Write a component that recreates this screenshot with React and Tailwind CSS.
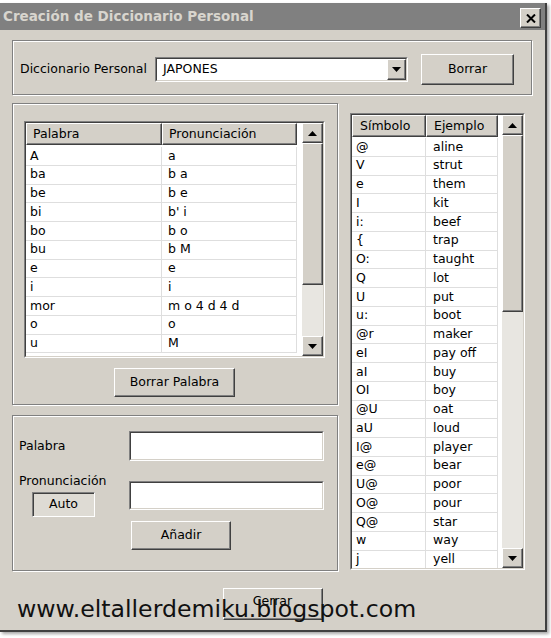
import React from 'react';

const raised =
  "border border-t-white border-l-white border-r-[#404040] border-b-[#404040] shadow-[inset_-1px_-1px_0_#808080]";
const sunkenOuter = "border border-t-[#808080] border-l-[#808080] border-b-white border-r-white";
const sunkenInner = "border border-t-[#404040] border-l-[#404040] border-b-[#d4d0c8] border-r-[#d4d0c8]";
const group = "border border-[#808080] shadow-[inset_1px_1px_0_#fff,1px_1px_0_#fff]";

const Tri = ({ up }) => (
  <svg width="9" height="5" viewBox="0 0 9 5">
    <path d={up ? 'M0 5L4.5 0L9 5Z' : 'M0 0L4.5 5L9 0Z'} fill="#000" />
  </svg>
);

const ArrowBtn = ({ up, className }) => (
  <div className={`${raised} bg-[#d4d0c8] flex items-center justify-center shrink-0 ${className}`}>
    <Tri up={up} />
  </div>
);

const Scrollbar = ({ thumb }) => (
  <div className="w-[21px] h-full flex flex-col bg-[#e8e6e1] shrink-0">
    <ArrowBtn up className="h-[20px]" />
    <div className={`${raised} bg-[#d4d0c8] shrink-0 ${thumb}`} />
    <div className="flex-1" />
    <ArrowBtn className="h-[20px]" />
  </div>
);

const ListView = ({ box, cols, rows, thumb, rowsPt }) => (
  <div className={`${sunkenOuter} shrink-0 ${box}`}>
    <div className={`${sunkenInner} bg-white h-full flex overflow-hidden`}>
      <div className="flex flex-col">
        <div className="flex h-[22px] shrink-0">
          {cols.map((c) => (
            <div key={c.label} className={`${raised} bg-[#d4d0c8] ${c.w} ${c.hp} flex items-center`}>
              {c.label}
            </div>
          ))}
        </div>
        <div className={rowsPt}>
          {rows.map((r, i) => (
            <div key={i} className="flex h-[18.75px]">
              {r.map((t, j) => (
                <div
                  key={j}
                  className={`${cols[j].w} ${cols[j].rp} border-r border-b border-[#dedede] flex items-center whitespace-pre`}
                >
                  {t}
                </div>
              ))}
            </div>
          ))}
        </div>
      </div>
      <div className="flex-1" />
      <Scrollbar thumb={thumb} />
    </div>
  </div>
);

const palabras = [
  ['A', 'a'],
  ['ba', 'b a'],
  ['be', 'b e'],
  ['bi', "b' i"],
  ['bo', 'b o'],
  ['bu', 'b M'],
  ['e', 'e'],
  ['i', 'i'],
  ['mor', 'm o 4 d 4 d'],
  ['o', 'o'],
  ['u', 'M'],
];

const simbolos = [
  ['@', 'aline'],
  ['V', 'strut'],
  ['e', 'them'],
  ['I', 'kit'],
  ['i:', 'beef'],
  ['{', 'trap'],
  ['O:', 'taught'],
  ['Q', 'lot'],
  ['U', 'put'],
  ['u:', 'boot'],
  ['@r', 'maker'],
  ['eI', 'pay off'],
  ['aI', 'buy'],
  ['OI', 'boy'],
  ['@U', 'oat'],
  ['aU', 'loud'],
  ['I@', 'player'],
  ['e@', 'bear'],
  ['U@', 'poor'],
  ['O@', 'pour'],
  ['Q@', 'star'],
  ['w', 'way'],
  ['j', 'yell'],
];

const Field = ({ className, children }) => (
  <div className={`${sunkenOuter} ${className}`}>
    <div className={`${sunkenInner} bg-white h-full flex items-center`}>{children}</div>
  </div>
);

export default function App() {
  return (
    <div className="w-[551px] h-[638px] bg-white relative overflow-hidden font-['DejaVu_Sans',sans-serif] text-[12.5px] leading-none text-black">
      <div className="mt-[3px] w-[547px] h-[629px] bg-[#d4d0c8] border-r-2 border-b-2 border-r-[#404040] border-b-[#404040] shadow-[2px_2px_3px_rgba(0,0,0,0.35)] flex flex-col">
        {/* title bar */}
        <div className="h-[27px] bg-[#808080] flex items-center justify-between pl-[3px] pr-[4px] shrink-0">
          <span className="font-bold text-[13.5px] text-[#d8d5ce]">Creación de Diccionario Personal</span>
          <div className={`${raised} bg-[#d4d0c8] w-[21px] h-[20px] mt-[3px] flex items-center justify-center`}>
            <svg width="10" height="9" viewBox="0 0 10 9">
              <path d="M1 0.5L9 8.5M9 0.5L1 8.5" stroke="#000" strokeWidth="2" />
            </svg>
          </div>
        </div>

        <div className="flex-1 flex flex-col px-[12px] pt-[10px]">
          {/* diccionario */}
          <div className={`${group} w-[520px] h-[55px] flex items-center pl-[7px] pt-[3px] shrink-0`}>
            <span className="w-[135px]">Diccionario Personal</span>
            <Field className="w-[253px] h-[25px]">
              <span className="flex-1 pl-[6px]">JAPONES</span>
              <ArrowBtn className="w-[19px] h-full" />
            </Field>
            <button className={`${raised} bg-[#d4d0c8] ml-[13px] w-[93px] h-[31px]`}>Borrar</button>
          </div>

          <div className="mt-[8px] flex gap-[12px]">
            <div className="w-[326px] flex flex-col">
              <div className={`${group} h-[302px] flex flex-col pt-[17px] pl-[11px]`}>
                <ListView
                  box="w-[301px] h-[237px]"
                  rowsPt="pt-[2px]"
                  thumb="h-[142px]"
                  cols={[
                    { label: 'Palabra', w: 'w-[136px]', hp: 'pl-[6px]', rp: 'pl-[4px]' },
                    { label: 'Pronunciación', w: 'w-[135px]', hp: 'pl-[6px]', rp: 'pl-[6px]' },
                  ]}
                  rows={palabras}
                />
                <button className={`${raised} bg-[#d4d0c8] mt-[10px] ml-[90px] w-[121px] h-[29px] shrink-0`}>
                  Borrar Palabra
                </button>
              </div>

              <div className={`${group} mt-[10px] h-[156px] flex flex-col pt-[15px]`}>
                <div className="flex items-center">
                  <span className="w-[116px] pl-[6px]">Palabra</span>
                  <Field className="w-[195px] h-[30px]" />
                </div>
                <div className="flex mt-[12px]">
                  <div className="w-[116px] pl-[6px] flex flex-col">
                    <span className="h-[16px] flex items-center">Pronunciación</span>
                    <div
                      className={`${sunkenOuter} mt-[3px] ml-[13px] w-[63px] h-[25px] bg-[#dedbd4] shadow-[inset_1px_1px_0_#404040] flex items-center justify-center`}
                    >
                      Auto
                    </div>
                  </div>
                  <Field className="mt-[8px] w-[195px] h-[29px]" />
                </div>
                <button className={`${raised} bg-[#d4d0c8] mt-[4px] ml-[118px] w-[100px] h-[29px]`}>Añadir</button>
              </div>
            </div>

            <ListView
              box="mt-[10px] w-[175px] h-[457px]"
              rowsPt="pt-[1px]"
              thumb="h-[177px]"
              cols={[
                { label: 'Símbolo', w: 'w-[74px]', hp: 'pl-[7px]', rp: 'pl-[4px]' },
                { label: 'Ejemplo', w: 'w-[72px]', hp: 'pl-[7px]', rp: 'pl-[7px]' },
              ]}
              rows={simbolos}
            />
          </div>

          <button className={`${raised} bg-[#d4d0c8] mt-[17px] self-center w-[100px] h-[32px] pb-[6px]`}>Cerrar</button>
        </div>
      </div>

      <div className="absolute left-[17px] top-[598px] text-[23.6px] leading-none text-[#111] whitespace-nowrap">
        www.eltallerdemiku.blogspot.com
      </div>
    </div>
  );
}
